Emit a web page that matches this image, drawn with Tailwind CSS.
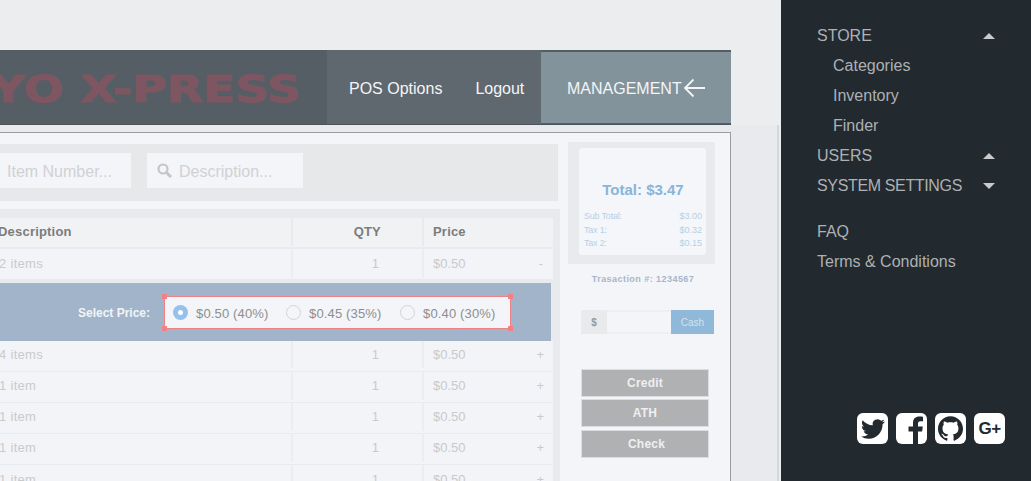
<!DOCTYPE html>
<html lang="en">
<head>
    <meta charset="UTF-8">
    <meta name="viewport" content="width=device-width, initial-scale=1.0">
    <title>POS Management</title>
    <script src="https://cdn.jsdelivr.net/npm/@tailwindcss/browser@4"></script>
</head>
<body class="bg-[#ecedef] font-['Liberation_Sans',sans-serif]">
<div class="flex w-[1031px] h-[481px] overflow-hidden">
    <main class="w-[781px] h-full flex flex-col pt-[50px] overflow-hidden">
        <!-- top bar -->
        <header class="w-[731px] h-[75px] shrink-0 flex bg-[#555e65] border-b border-[#4d555c] text-[#f4f5f6] text-[16px]">
            <div class="w-[327px] mt-[2px] mb-px overflow-hidden flex items-center pt-[3px]">
                <span class="block -ml-[9px] origin-left scale-x-[1.24] font-['DejaVu_Sans',sans-serif] font-bold text-[38px] leading-none text-[#7d5661] [-webkit-text-stroke:1px_#7d5661] whitespace-nowrap">YO X-PRESS</span>
            </div>
            <div class="w-[214px] bg-[#60686f] flex items-center gap-[33px] pl-[22px] pt-[3px]">
                <span>POS Options</span>
                <span>Logout</span>
            </div>
            <div class="flex-1 mt-[2px] mb-px bg-[#82939c] flex items-center pl-[26px] pt-[2px]">
                <span>MANAGEMENT</span>
                <svg class="ml-[1px] -mt-[1px]" width="22" height="20" viewBox="0 0 22 20" fill="none" stroke="#f4f5f6" stroke-width="1.8"><path d="M22 10H2M10.500 1.500L2 10l8.500 8.500"/></svg>
            </div>
        </header>

        <div class="flex-1 min-h-0 w-[779px] bg-[#e9eaee] border-r-2 border-[#d6d7db] pt-[7px]">
            <div class="w-[731px] h-full flex bg-[#f4f5f8] border-t border-r border-[#9a9c9e]">
                <!-- left column -->
                <div class="w-[560px] shrink-0 flex flex-col pt-[11px]">
                    <div class="w-[558px] h-[57px] shrink-0 bg-[#e7e8ea] flex gap-[16px] pt-[9px] text-[16px] text-[#d0d1d4]">
                        <div class="w-[131px] h-[35px] bg-[#f4f5f8] flex items-center pl-[7px] pt-[2px]">Item Number...</div>
                        <div class="w-[156px] h-[35px] bg-[#f4f5f8] flex items-center pl-[10px] gap-[7px]">
                            <svg width="15" height="15" viewBox="0 0 15 15" fill="none" stroke="#c4c5c8"><circle cx="6" cy="6" r="4.500" stroke-width="2.200"/><path d="M9.500 9.500L14 14" stroke-width="3"/></svg>
                            <span class="pt-[2px]">Description...</span>
                        </div>
                    </div>

                    <div class="flex-1 mt-[8px] bg-[#e9eaed] pt-[9px] overflow-hidden">
                        <div class="w-[553px] grid grid-cols-[293px_131px_129px] h-[31px] pb-[1px] text-[13px] font-bold text-[#7b7c7e] tracking-[0.2px] border-b-2 border-[#e9eaed] bg-[#f1f2f4]">
                            <div class="border-r-2 border-[#e9eaed] flex items-center -ml-[2px]">Description</div>
                            <div class="border-r-2 border-[#e9eaed] flex items-center justify-end pr-[41px]">QTY</div>
                            <div class="flex items-center pl-[9px]">Price</div>
                        </div>
                        <div class="w-[553px] grid grid-cols-[293px_131px_129px] h-[30px] pb-[1px] text-[13px] text-[#c9cacc] bg-[#f3f4f7]">
                            <div class="border-r-2 border-[#ecedf0] flex items-center -ml-[1px] tracking-[0.3px]">2 items</div>
                            <div class="border-r-2 border-[#ecedf0] flex items-center justify-end pr-[43px]">1</div>
                            <div class="flex items-center justify-between pl-[9px] pr-[10px]"><span>$0.50</span><span>-</span></div>
                        </div>

                        <!-- price picker row -->
                        <div class="w-[551px] h-[58px] mt-[4px] bg-[#a1b4c9] flex items-center">
                            <span class="w-[150px] pt-[2px] text-right text-[12px] font-bold text-[#f1f4f7]">Select Price:</span>
                            <div class="relative ml-[14px] w-[347px] h-[33px] bg-[#f4f5f8] border-[1.5px] border-[#ef8286] flex items-center pl-[8px] text-[13px] text-[#8d8e90]">
                                <span class="absolute -left-[3px] -top-[3px] w-[5px] h-[5px] bg-[#ef8286]"></span>
                                <span class="absolute -right-[3px] -top-[3px] w-[5px] h-[5px] bg-[#ef8286]"></span>
                                <span class="absolute -left-[3px] -bottom-[3px] w-[5px] h-[5px] bg-[#ef8286]"></span>
                                <span class="absolute -right-[3px] -bottom-[3px] w-[5px] h-[5px] bg-[#ef8286]"></span>
                                <div class="w-[113px] flex items-center gap-[8px]">
                                    <span class="w-[15px] h-[15px] rounded-full bg-[#94c1ee] flex items-center justify-center"><span class="w-[5px] h-[5px] rounded-full bg-white"></span></span>
                                    <span class="pt-[4px] tracking-[0.15px]">$0.50 (40%)</span>
                                </div>
                                <div class="w-[114px] flex items-center gap-[8px]">
                                    <span class="w-[15px] h-[15px] rounded-full border border-[#d3d4d6]"></span>
                                    <span class="pt-[4px] tracking-[0.15px]">$0.45 (35%)</span>
                                </div>
                                <div class="flex items-center gap-[8px]">
                                    <span class="w-[15px] h-[15px] rounded-full border border-[#d3d4d6]"></span>
                                    <span class="pt-[4px] tracking-[0.15px]">$0.40 (30%)</span>
                                </div>
                            </div>
                        </div>

                        <div class="w-[553px] grid grid-cols-[293px_131px_129px] h-[31px] pb-[3px] text-[13px] text-[#c9cacc] bg-[#f3f4f7] border-b border-[#e9eaee]">
                            <div class="border-r-2 border-[#ecedf0] flex items-center -ml-[1px] tracking-[0.3px]">4 items</div>
                            <div class="border-r-2 border-[#ecedf0] flex items-center justify-end pr-[43px]">1</div>
                            <div class="flex items-center justify-between pl-[9px] pr-[9px]"><span>$0.50</span><span>+</span></div>
                        </div>
                        <div class="w-[553px] grid grid-cols-[293px_131px_129px] h-[31px] pb-[2px] text-[13px] text-[#c9cacc] bg-[#f3f4f7] border-b border-[#e9eaee]">
                            <div class="border-r-2 border-[#ecedf0] flex items-center -ml-[1px] tracking-[0.3px]">1 item</div>
                            <div class="border-r-2 border-[#ecedf0] flex items-center justify-end pr-[43px]">1</div>
                            <div class="flex items-center justify-between pl-[9px] pr-[9px]"><span>$0.50</span><span>+</span></div>
                        </div>
                        <div class="w-[553px] grid grid-cols-[293px_131px_129px] h-[31px] pb-[2px] text-[13px] text-[#c9cacc] bg-[#f3f4f7] border-b border-[#e9eaee]">
                            <div class="border-r-2 border-[#ecedf0] flex items-center -ml-[1px] tracking-[0.3px]">1 item</div>
                            <div class="border-r-2 border-[#ecedf0] flex items-center justify-end pr-[43px]">1</div>
                            <div class="flex items-center justify-between pl-[9px] pr-[9px]"><span>$0.50</span><span>+</span></div>
                        </div>
                        <div class="w-[553px] grid grid-cols-[293px_131px_129px] h-[31px] pb-[2px] text-[13px] text-[#c9cacc] bg-[#f3f4f7] border-b border-[#e9eaee]">
                            <div class="border-r-2 border-[#ecedf0] flex items-center -ml-[1px] tracking-[0.3px]">1 item</div>
                            <div class="border-r-2 border-[#ecedf0] flex items-center justify-end pr-[43px]">1</div>
                            <div class="flex items-center justify-between pl-[9px] pr-[9px]"><span>$0.50</span><span>+</span></div>
                        </div>
                        <div class="w-[553px] grid grid-cols-[293px_131px_129px] h-[31px] pb-[2px] text-[13px] text-[#c9cacc] bg-[#f3f4f7]">
                            <div class="border-r-2 border-[#ecedf0] flex items-center -ml-[1px] tracking-[0.3px]">1 item</div>
                            <div class="border-r-2 border-[#ecedf0] flex items-center justify-end pr-[43px]">1</div>
                            <div class="flex items-center justify-between pl-[9px] pr-[9px]"><span>$0.50</span><span>+</span></div>
                        </div>
                    </div>
                </div>

                <!-- totals column -->
                <div class="flex-1 pt-[9px] pl-[8px]">
                    <div class="w-[147px] h-[122px] bg-[#e9eaed] pt-[6px] pl-[11px]">
                        <div class="w-[127px] h-[107px] bg-[#f4f6f9] rounded-[3px] pl-[5px] pr-[4px] pt-[33px] text-[#b7d0e6] text-[9px] leading-[13.500px]">
                            <div class="text-center text-[15px] leading-[18px] font-bold text-[#88b5d8] mb-[11px]">Total: $3.47</div>
                            <div class="flex justify-between"><span class="tracking-[-0.2px]">Sub Total:</span><span>$3.00</span></div>
                            <div class="flex justify-between"><span class="tracking-[-0.2px]">Tax 1:</span><span>$0.32</span></div>
                            <div class="flex justify-between"><span class="tracking-[-0.2px]">Tax 2:</span><span>$0.15</span></div>
                        </div>
                    </div>
                    <div class="w-[147px] mt-[9px] pl-[3px] text-center text-[9px] leading-[12px] font-bold tracking-[0.45px] text-[#a7b6ca]">Trasaction #: 1234567</div>
                    <div class="ml-[13px] mt-[25px] w-[133px] h-[24px] flex text-[10px]">
                        <div class="w-[26px] bg-[#e9eaec] text-[#97989a] flex items-center justify-center font-bold">$</div>
                        <div class="w-[64px] bg-[#f4f5f8] border-y-2 border-[#eeeff1]"></div>
                        <div class="flex-1 bg-[#8fb8d9] text-[#d4e3ef] flex items-center justify-center">Cash</div>
                    </div>
                    <div class="ml-[13px] mt-[35px] w-[128px] flex flex-col text-[12px] font-bold text-[#eeeff1] tracking-[0.2px]">
                        <div class="h-[28px] bg-[#b0b1b3] border border-[#dcdde0] flex items-center justify-center">Credit</div>
                        <div class="h-[28px] mt-[2px] bg-[#b0b1b3] border border-[#dcdde0] flex items-center justify-center">ATH</div>
                        <div class="h-[28px] mt-[3px] bg-[#b0b1b3] border border-[#dcdde0] flex items-center justify-center pl-[3px]">Check</div>
                    </div>
                </div>
            </div>
        </div>
    </main>

    <!-- sidebar -->
    <aside class="w-[250px] h-full bg-[#22292f] flex flex-col pl-[36px] pr-[36px] pt-[21px] text-[16px] leading-[30px] text-[#adb1b4]">
        <div class="flex items-center justify-between"><span>STORE</span><span class="w-0 h-0 border-x-[6px] border-x-transparent border-b-[6px] border-b-[#c8cacb]"></span></div>
        <div class="pl-[16px]">Categories</div>
        <div class="pl-[16px]">Inventory</div>
        <div class="pl-[16px]">Finder</div>
        <div class="flex items-center justify-between"><span>USERS</span><span class="w-0 h-0 border-x-[6px] border-x-transparent border-b-[6px] border-b-[#c8cacb]"></span></div>
        <div class="flex items-center justify-between"><span class="tracking-[-0.35px]">SYSTEM SETTINGS</span><span class="w-0 h-0 border-x-[6px] border-x-transparent border-t-[6px] border-t-[#c8cacb]"></span></div>
        <div class="mt-[16px]">FAQ</div>
        <div>Terms &amp; Conditions</div>

        <div class="mt-[136px] -mr-[10px] flex justify-end gap-[8px] text-[#22292f]">
            <span class="w-[31px] h-[31px] rounded-[6px] bg-white flex items-center justify-center">
                <svg width="24" height="24" viewBox="0 0 24 24" fill="currentColor"><path d="M23.953 4.57a10 10 0 01-2.825.775 4.958 4.958 0 002.163-2.723c-.951.555-2.005.959-3.127 1.184a4.92 4.92 0 00-8.384 4.482C7.69 8.095 4.067 6.13 1.64 3.162a4.822 4.822 0 00-.666 2.475c0 1.71.87 3.213 2.188 4.096a4.904 4.904 0 01-2.228-.616v.06a4.923 4.923 0 003.946 4.827 4.996 4.996 0 01-2.212.085 4.936 4.936 0 004.604 3.417 9.867 9.867 0 01-6.102 2.105c-.39 0-.779-.023-1.17-.067a13.995 13.995 0 007.557 2.209c9.053 0 13.998-7.496 13.998-13.985 0-.21 0-.42-.015-.63A9.935 9.935 0 0024 4.59z"/></svg>
            </span>
            <span class="w-[31px] h-[31px] rounded-[6px] bg-white overflow-hidden">
                <svg width="31" height="31" viewBox="0 0 31 31" fill="currentColor"><path d="M17 31V18.500h-4.500v-5H17v-3.600C17 5.600 19.600 3.500 23.300 3.500c1.700 0 3.100.1 3.700.2v4.500h-2.600c-2 0-2.400 1-2.400 2.400v2.900h4.800l-.7 5H22V31z"/></svg>
            </span>
            <span class="w-[31px] h-[31px] rounded-[6px] bg-white flex items-center justify-center">
                <svg width="25" height="25" viewBox="0 0 24 24" fill="currentColor"><path d="M12 .297c-6.63 0-12 5.373-12 12 0 5.303 3.438 9.8 8.205 11.385.6.113.82-.258.82-.577 0-.285-.01-1.04-.015-2.04-3.338.724-4.042-1.61-4.042-1.61C4.422 18.07 3.633 17.7 3.633 17.7c-1.087-.744.084-.729.084-.729 1.205.084 1.838 1.236 1.838 1.236 1.07 1.835 2.809 1.305 3.495.998.108-.776.417-1.305.76-1.605-2.665-.3-5.466-1.332-5.466-5.93 0-1.31.465-2.38 1.235-3.22-.135-.303-.54-1.523.105-3.176 0 0 1.005-.322 3.3 1.23.96-.267 1.98-.399 3-.405 1.02.006 2.04.138 3 .405 2.28-1.552 3.285-1.23 3.285-1.23.645 1.653.24 2.873.12 3.176.765.84 1.23 1.91 1.23 3.22 0 4.61-2.805 5.625-5.475 5.92.42.36.81 1.096.81 2.22 0 1.606-.015 2.896-.015 3.286 0 .315.21.69.825.57C20.565 22.092 24 17.592 24 12.297c0-6.627-5.373-12-12-12"/></svg>
            </span>
            <span class="w-[31px] h-[31px] rounded-[6px] bg-white flex items-center justify-center font-bold text-[17px] leading-none tracking-[-0.5px]">G+</span>
        </div>
    </aside>
</div>
</body>
</html>
